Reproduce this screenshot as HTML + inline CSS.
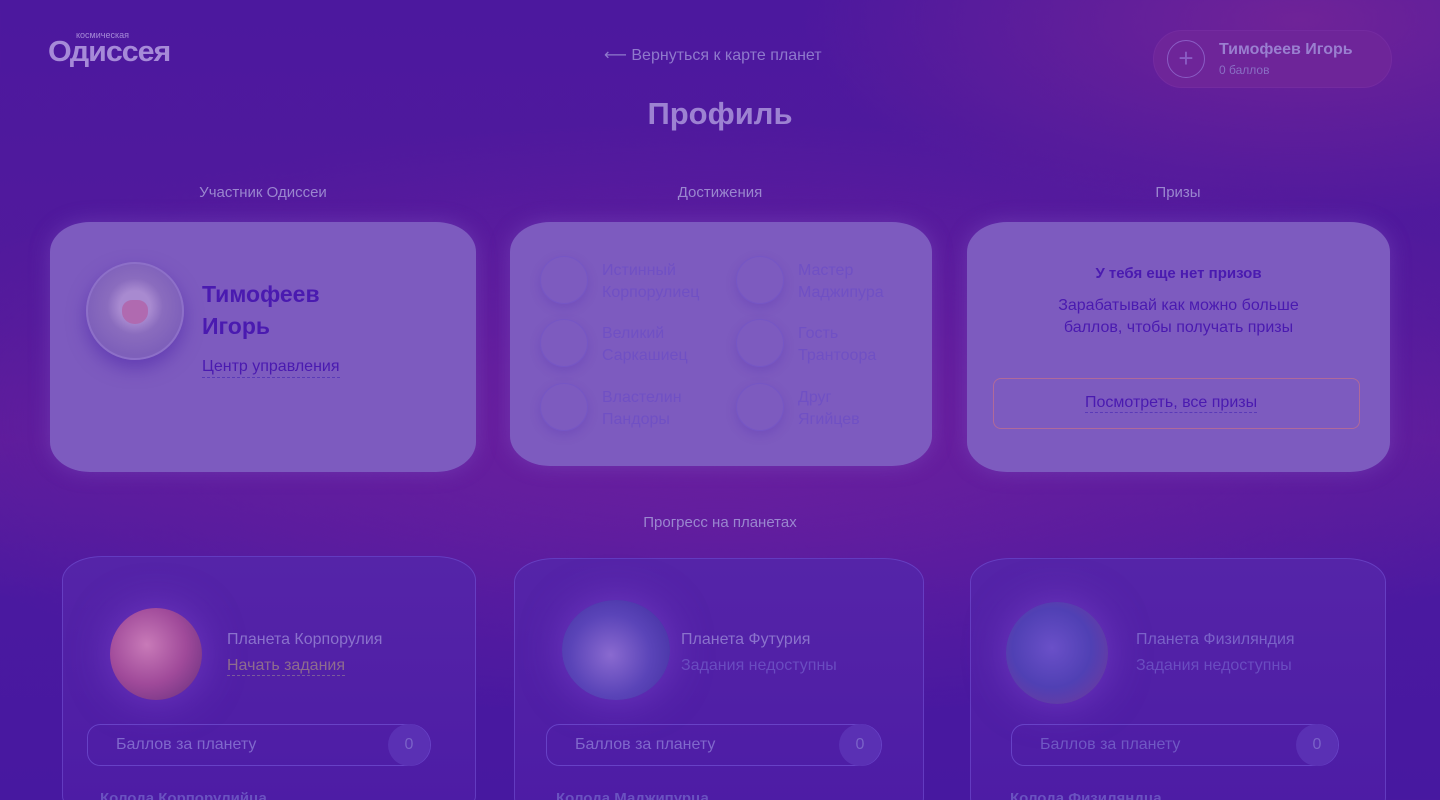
<!DOCTYPE html>
<html style="overflow:hidden;height:800px"><head><meta charset="utf-8"><style>
*{margin:0;padding:0;box-sizing:border-box}
body{width:1440px;height:800px;overflow:hidden;font-family:"Liberation Sans","DejaVu Sans",sans-serif;position:relative;
background:radial-gradient(ellipse 900px 300px at 720px 420px,#6a1f9f 0%,rgba(106,31,159,0) 100%),radial-gradient(ellipse 500px 200px at 1300px 20px,#6f2398 0%,rgba(111,35,152,0) 100%),linear-gradient(180deg,#4c189e 0%,#521a9c 40%,#5c1c9c 55%,#4a19a0 75%,#4718a0 100%);}
.abs{position:absolute}
.lbl{position:absolute;color:#9a86cf;font-size:15px;text-align:center;width:300px}
.card{position:absolute;background:#7d5bbf;border-radius:40px/30px;box-shadow:0 0 20px rgba(130,90,200,.4)}
.dark{color:#4a1ab0}
.pcard{position:absolute;border:1px solid rgba(120,90,220,.5);border-radius:40px 40px 10px 10px/24px 24px 10px 10px;background:linear-gradient(180deg,#5524a8,#4d1ca5)}
.bar{position:absolute;height:42px;border:1px solid rgba(120,90,220,.6);border-radius:14px 22px 22px 14px;color:#8068cc;font-size:16px;padding:11px 0 0 28px}
.bar span{position:absolute;right:0;top:-1px;width:42px;height:42px;border-radius:50%;background:#5a30b4;text-align:center;line-height:42px;color:#7a62c8}
.ach{position:absolute;width:48px;height:48px;border-radius:50%;border:1px solid #7656c4;box-shadow:0 4px 10px rgba(90,50,180,.3)}
.at{position:absolute;color:#7050c4;font-size:16px;line-height:22px}
</style></head><body>
<div class="abs" style="left:48px;top:36px;color:#a68ad8;font-weight:bold;font-size:29px;letter-spacing:-1px;transform:scaleX(1.05);transform-origin:left">Одиссея</div>
<div class="abs" style="left:76px;top:30px;color:#a68ad8;font-size:9px">космическая</div>
<div class="abs" style="left:604px;top:45px;color:#8f79cc;font-size:16px">⟵ Вернуться к карте планет</div>
<div class="abs" style="left:0;width:1440px;top:96px;text-align:center;color:#9d82d2;font-size:31px;font-weight:bold">Профиль</div>
<div class="abs" style="left:1153px;top:30px;width:239px;height:58px;border-radius:29px;background:#6e2599;border:1px solid #742ba0"></div>
<div class="abs" style="left:1167px;top:40px;width:38px;height:38px;border-radius:50%;border:1px solid #8a5cc4;color:#8a5cc4;font-size:26px;text-align:center;line-height:34px">+</div>
<div class="abs" style="left:1219px;top:41px;color:#9a7fd0;font-weight:bold;font-size:16px">Тимофеев Игорь</div>
<div class="abs" style="left:1219px;top:63px;color:#8a6fc4;font-size:12px">0 баллов</div>

<div class="lbl" style="left:113px;top:184px">Участник Одиссеи</div>
<div class="lbl" style="left:570px;top:184px">Достижения</div>
<div class="lbl" style="left:1028px;top:184px">Призы</div>

<div class="card" style="left:50px;top:222px;width:426px;height:250px"></div>
<div class="abs" style="left:86px;top:262px;width:98px;height:98px;border-radius:50%;background:radial-gradient(circle at 50% 45%,#a88ad0 0 22%,#8a6cbe 40%,#7e60ba 70%);border:2px solid #8d70c8;box-shadow:0 8px 18px rgba(80,40,170,.6)"></div>
<div class="abs" style="left:122px;top:300px;width:26px;height:24px;border-radius:40% 40% 50% 50%;background:#b06ab0"></div>
<div class="abs dark" style="left:202px;top:278px;font-size:23px;font-weight:bold;line-height:32px">Тимофеев<br>Игорь</div>
<div class="abs dark" style="left:202px;top:358px;font-size:16px;border-bottom:1px dashed #5a3ab8;padding-bottom:1px">Центр управления</div>

<div class="card" style="left:510px;top:222px;width:422px;height:244px"></div>
<div class="ach" style="left:540px;top:256px"></div><div class="at" style="left:602px;top:260px">Истинный<br>Корпорулиец</div>
<div class="ach" style="left:736px;top:256px"></div><div class="at" style="left:798px;top:260px">Мастер<br>Маджипура</div>
<div class="ach" style="left:540px;top:319px"></div><div class="at" style="left:602px;top:323px">Великий<br>Саркашиец</div>
<div class="ach" style="left:736px;top:319px"></div><div class="at" style="left:798px;top:323px">Гость<br>Трантоора</div>
<div class="ach" style="left:540px;top:383px"></div><div class="at" style="left:602px;top:387px">Властелин<br>Пандоры</div>
<div class="ach" style="left:736px;top:383px"></div><div class="at" style="left:798px;top:387px">Друг<br>Ягийцев</div>

<div class="card" style="left:967px;top:222px;width:423px;height:250px"></div>
<div class="abs dark" style="left:967px;width:423px;top:265px;text-align:center;font-weight:bold;font-size:15px">У тебя еще нет призов</div>
<div class="abs dark" style="left:967px;width:423px;top:295px;text-align:center;font-size:16px;line-height:22px">Зарабатывай как можно больше<br>баллов, чтобы получать призы</div>
<div class="abs" style="left:993px;top:378px;width:367px;height:51px;border:1px solid #b06a9a;border-radius:8px"></div>
<div class="abs dark" style="left:1085px;top:394px;font-size:16px;border-bottom:1px dashed #5a3ab8">Посмотреть, все призы</div>

<div class="lbl" style="left:570px;top:514px">Прогресс на планетах</div>

<div class="pcard" style="left:62px;top:556px;width:414px;height:250px"></div>
<div class="pcard" style="left:514px;top:558px;width:410px;height:250px"></div>
<div class="pcard" style="left:970px;top:558px;width:416px;height:250px"></div>

<div class="abs" style="left:110px;top:608px;width:92px;height:92px;border-radius:50%;background:radial-gradient(circle at 40% 40%,#c87ab8,#a04a9a 50%,#7a3888 80%);box-shadow:0 0 40px rgba(140,80,220,.5)"></div>
<div class="abs" style="left:227px;top:631px;color:#8a72cc;font-size:16px">Планета Корпорулия</div>
<div class="abs" style="left:227px;top:657px;color:#8e6c8e;font-size:16px;border-bottom:1px dashed #7a5a9a">Начать задания</div>
<div class="bar" style="left:87px;top:724px;width:344px">Баллов за планету<span>0</span></div>

<div class="abs" style="left:562px;top:600px;width:108px;height:100px;border-radius:50%;background:radial-gradient(circle at 45% 55%,#8a6ad0,#5a44b8 50%,#4a36a8 80%);box-shadow:0 0 40px rgba(140,80,220,.5)"></div>
<div class="abs" style="left:681px;top:631px;color:#8a72cc;font-size:16px">Планета Футурия</div>
<div class="abs" style="left:681px;top:657px;color:#6a4cc0;font-size:16px">Задания недоступны</div>
<div class="bar" style="left:546px;top:724px;width:336px">Баллов за планету<span>0</span></div>

<div class="abs" style="left:1006px;top:602px;width:102px;height:102px;border-radius:50%;background:radial-gradient(circle at 45% 45%,#6a50c8,#5040b4 50%,#6a3aa0 85%);box-shadow:0 0 40px rgba(140,80,220,.5)"></div>
<div class="abs" style="left:1136px;top:631px;color:#7a62c8;font-size:16px">Планета Физиляндия</div>
<div class="abs" style="left:1136px;top:657px;color:#6a4cc0;font-size:16px">Задания недоступны</div>
<div class="bar" style="left:1011px;top:724px;width:328px;color:#7058c4">Баллов за планету<span>0</span></div>

<div class="abs" style="left:100px;top:790px;color:#6a52c0;font-size:15px;font-weight:bold;height:10px;overflow:hidden">Колода Корпорулийца</div>
<div class="abs" style="left:556px;top:790px;color:#6a52c0;font-size:15px;font-weight:bold;height:10px;overflow:hidden">Колода Маджипурца</div>
<div class="abs" style="left:1010px;top:790px;color:#6a52c0;font-size:15px;font-weight:bold;height:10px;overflow:hidden">Колода Физиляндца</div>
</body></html>
